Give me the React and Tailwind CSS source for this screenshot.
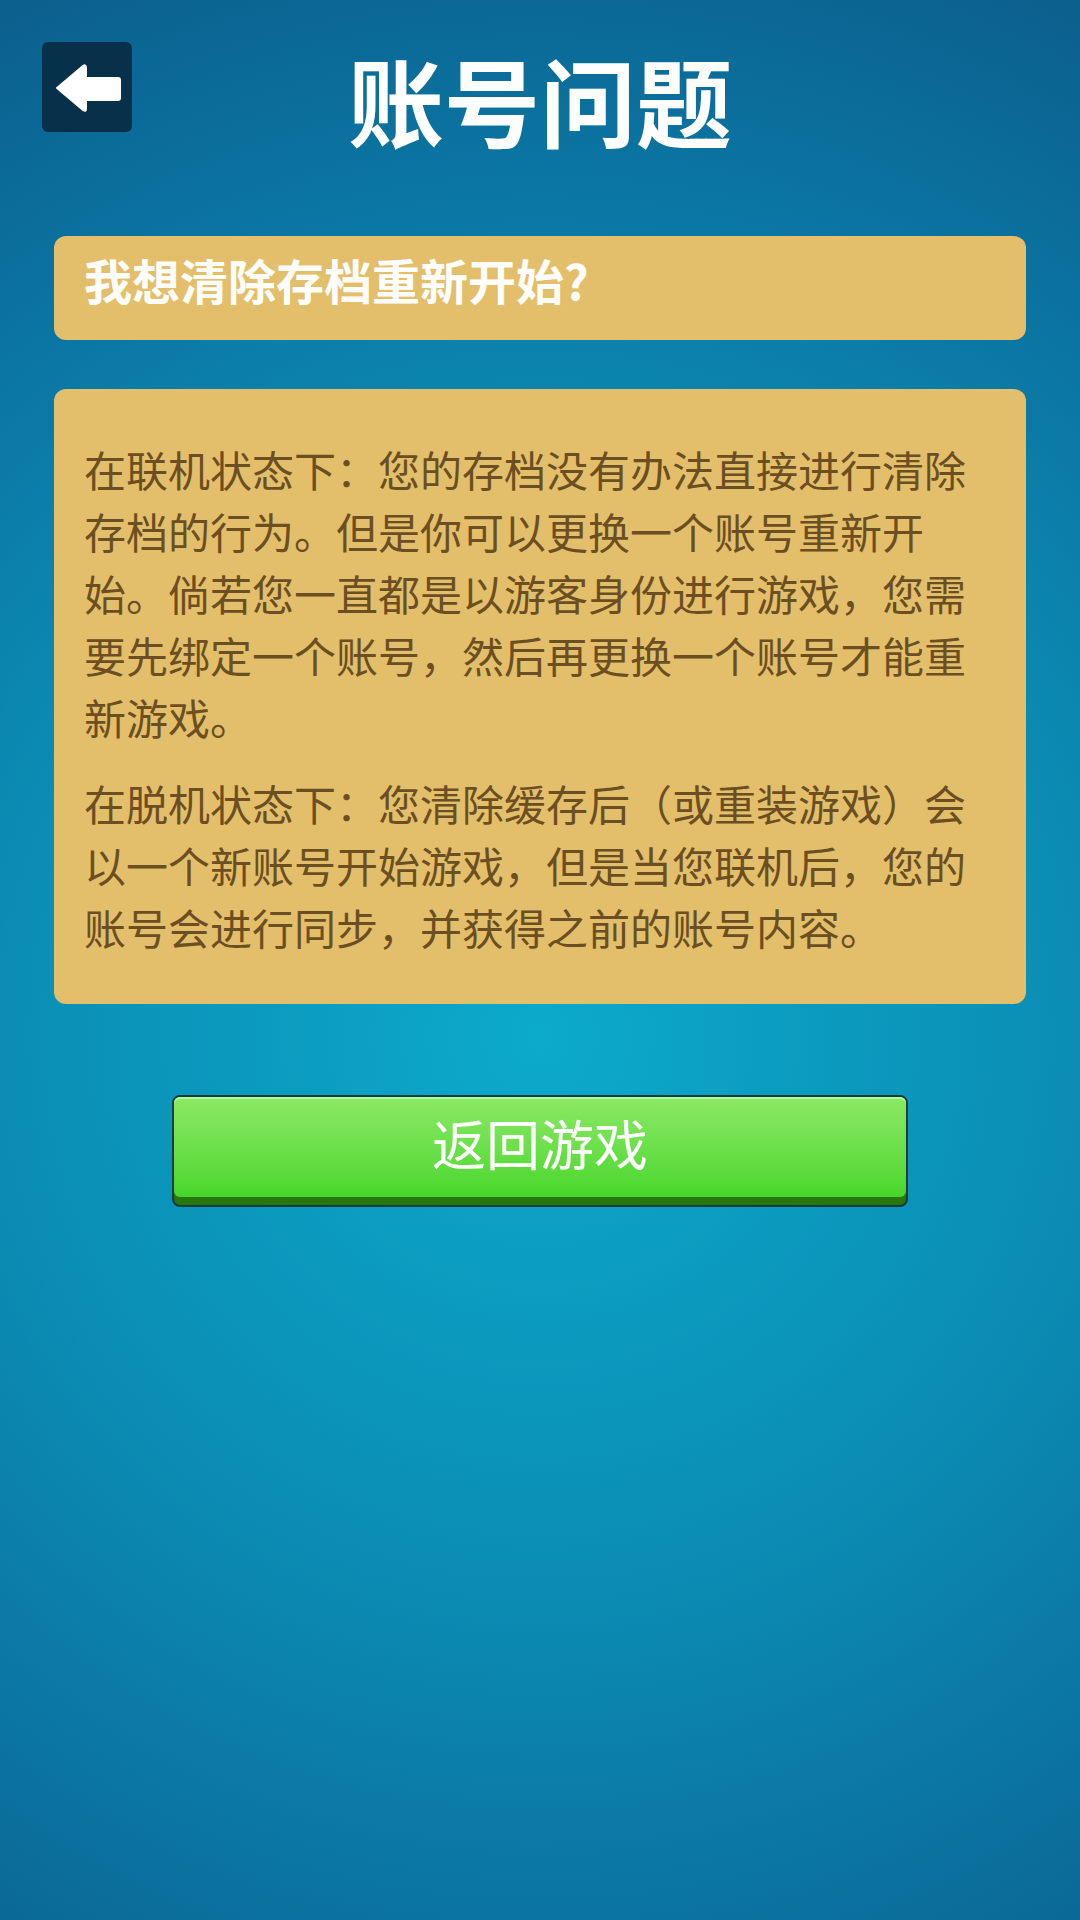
import React from "react";

const BackArrow = () => (
  <svg width="90" height="90" viewBox="0 0 90 90">
    <path
      d="M15 46 L41 24 Q44 22 44 26 L44 36 L76 36 Q78 36 78 38 L78 56 Q78 58 76 58 L44 58 L44 67 Q44 70 41 68 Z"
      fill="#ffffff"
      stroke="#ffffff"
      strokeWidth="2"
      strokeLinejoin="round"
    />
  </svg>
);

const App = () => {
  return (
    <div
      className="w-full min-h-[1920px] bg-[radial-gradient(circle_farthest-corner_at_50%_54%,#0caacb_0%,#0b8db5_46%,#0b6896_89%,#0c5f8c_100%)]"
      style={{ fontFamily: '"Noto Sans CJK SC", "Noto Sans", sans-serif' }}
    >
      {/* Header */}
      <div className="grid grid-cols-[90px_1fr_90px] px-[42px] pt-[42px]">
        <button className="w-[90px] h-[90px] rounded-[6px] bg-[#07304a] flex items-center justify-center">
          <BackArrow />
        </button>
        <h1 className="mt-[9px] text-center text-white font-bold text-[96px] leading-none">
          账号问题
        </h1>
        <div />
      </div>

      {/* Question */}
      <div className="mx-[54px] mt-[89px] rounded-[12px] bg-[#e4bf6b] pl-[30px] pt-[13px] pb-[31px]">
        <p className="text-white font-bold text-[48px] leading-[60px]">
          我想清除存档重新开始?
        </p>
      </div>

      {/* Answer */}
      <div className="mx-[54px] mt-[49px] rounded-[12px] bg-[#e4bf6b] pl-[30px] pr-[30px] pt-[49px] pb-[46px] text-[#6b4f22] text-[42px] leading-[62px]">
        <p>
          在联机状态下：您的存档没有办法直接进行清除存档的行为。但是你可以更换一个账号重新开始。倘若您一直都是以游客身份进行游戏，您需要先绑定一个账号，然后再更换一个账号才能重新游戏。
        </p>
        <p className="mt-[24px]">
          在脱机状态下：您清除缓存后（或重装游戏）会以一个新账号开始游戏，但是当您联机后，您的账号会进行同步，并获得之前的账号内容。
        </p>
      </div>

      {/* Button */}
      <div className="flex justify-center mt-[91px]">
        <button className="w-[736px] h-[112px] rounded-[8px] border-2 border-[#123c3e] bg-[#28760e] pb-[8px]">
          <div className="h-full rounded-[6px] bg-gradient-to-b from-[#8ae964] to-[#47d629] shadow-[inset_0_2px_0_#b6f59a] flex items-center justify-center pb-[8px]">
            <span className="text-white text-[54px] leading-none">返回游戏</span>
          </div>
        </button>
      </div>
    </div>
  );
};

export default App;
